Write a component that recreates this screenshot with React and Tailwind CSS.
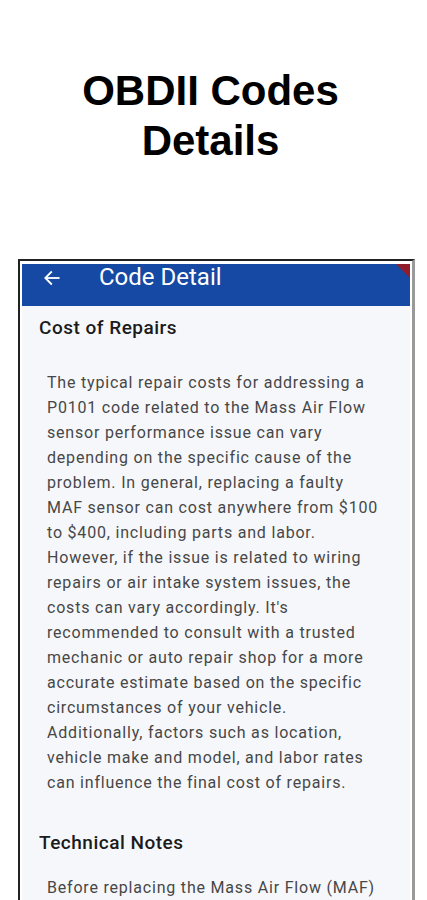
import React from 'react';

const costLines = [
  'The typical repair costs for addressing a',
  'P0101 code related to the Mass Air Flow',
  'sensor performance issue can vary',
  'depending on the specific cause of the',
  'problem. In general, replacing a faulty',
  'MAF sensor can cost anywhere from $100',
  'to $400, including parts and labor.',
  'However, if the issue is related to wiring',
  'repairs or air intake system issues, the',
  "costs can vary accordingly. It's",
  'recommended to consult with a trusted',
  'mechanic or auto repair shop for a more',
  'accurate estimate based on the specific',
  'circumstances of your vehicle.',
  'Additionally, factors such as location,',
  'vehicle make and model, and labor rates',
  'can influence the final cost of repairs.',
];

const App = () => {
  return (
    <div className="w-[427px] h-[900px] overflow-hidden bg-white">
      {/* Heading */}
      <h1 className="pt-[66px] pr-[6px] text-center text-[42px] leading-[50px] font-bold text-black font-['Liberation_Sans',Arial,sans-serif]">
        OBDII Codes
        <br />
        Details
      </h1>

      {/* Phone frame */}
      <div className="mt-[93px] ml-[18px] w-[397px] h-[700px] border-t-[2px] border-l-[2px] border-r-[3px] border-t-[#222] border-l-[#222] border-r-[#9a9a9a] bg-white pt-[3px] px-[2px]">
        <div className="h-full bg-[#f6f7fb] overflow-hidden">
          {/* App bar */}
          <div className="relative h-[42px] bg-[#1549a3] flex items-start font-['Roboto',sans-serif] text-white">
            <svg className="ml-[20px] mt-[4px]" width="20" height="20" viewBox="0 0 24 24" fill="none" stroke="white" strokeWidth="2.2" strokeLinecap="square">
              <path d="M20 12H5" />
              <path d="M11 5l-7 7 7 7" />
            </svg>
            <span className="ml-[37px] -mt-[1px] text-[24px] leading-[28px]">Code Detail</span>
            <div className="absolute top-0 right-0 w-0 h-0 border-t-[14px] border-l-[14px] border-t-[#8f1d2c] border-l-transparent" />
          </div>

          {/* Content */}
          <div className="pl-[17px] pr-[18px] font-['Roboto',sans-serif]">
            <h2 className="mt-[10px] text-[19px] leading-[24px] font-medium tracking-[0.5px] text-[#1b1b1b]">Cost of Repairs</h2>
            <p className="mt-[30px] pl-[8px] text-[16px] leading-[25px] tracking-[0.8px] text-[#474747]">
              {costLines.map((line, i) => (
                <span key={i} className="block whitespace-nowrap">{line}</span>
              ))}
            </p>
            <h2 className="mt-[36px] text-[19px] leading-[24px] font-medium tracking-[0.5px] text-[#1b1b1b]">Technical Notes</h2>
            <p className="mt-[20px] pl-[8px] text-[16px] leading-[25px] tracking-[0.8px] text-[#474747]">
              Before replacing the Mass Air Flow (MAF) sensor, it's important to check the wiring and connections for damage or corrosion.
            </p>
          </div>
        </div>
      </div>
    </div>
  );
};

export default App;
